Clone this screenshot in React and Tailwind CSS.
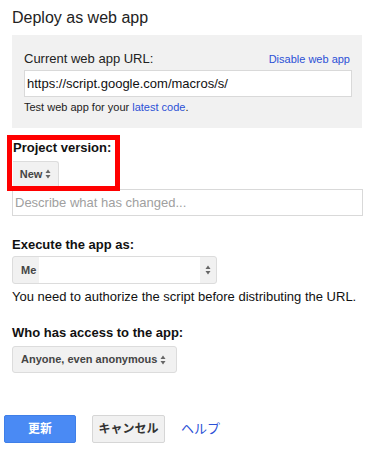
import React from 'react';

const Arrows = () => (
  <svg viewBox="0 0 6 10" className="w-[6px] h-[10px]">
    <path d="M3 0.5 L5.5 4 L0.5 4 Z" fill="#666" />
    <path d="M3 9.5 L5.5 6 L0.5 6 Z" fill="#666" />
  </svg>
);

export default function App() {
  return (
    <div
      className="relative w-[369px] h-[456px] bg-white text-[#111] pt-2"
      style={{ fontFamily: '"Liberation Sans", Arial, "Noto Sans CJK JP", sans-serif' }}
    >
      <h1 className="ml-3 text-[16px] leading-[20px] text-[#222]">Deploy as web app</h1>

      {/* Current URL panel */}
      <div className="ml-3 mt-[7px] w-[350px] bg-[#f1f1f1] pt-4 pl-3 pr-[10px] pb-[14px]">
        <div className="flex items-baseline justify-between">
          <span className="text-[13px] leading-4 text-[#222]">Current web app URL:</span>
          <a className="text-[11px] leading-4 text-[#2b50d6] mr-[2px]">Disable web app</a>
        </div>
        <div className="mt-[3px] h-[27px] bg-white border border-[#d9d9d9] flex items-center pl-[2px] text-[13px] text-[#111]">
          https://script.google.com/macros/s/
        </div>
        <p className="mt-[3px] text-[11px] leading-[14px] text-[#222]">
          Test web app for your <a className="text-[#2b50d6]">latest code</a>.
        </p>
      </div>

      {/* Project version */}
      <div className="ml-3 mt-3">
        <div className="ml-px text-[13px] leading-4 font-bold">Project version:</div>
        <div className="ml-px mt-[5px] w-[46px] h-[25px] bg-[#f1f1f1] border-t border-r border-[#dcdcdc] rounded-tr-[3px] flex items-center justify-center gap-[3px] text-[11px] font-bold text-[#444]">
          New <Arrows />
        </div>
        <div className="mt-[3px] w-[351px] h-[27px] border border-[#d9d9d9] flex items-center pl-[2px] text-[13px] text-[#a0a0a0]">
          Describe what has changed...
        </div>
      </div>

      {/* Red annotation */}
      <div className="absolute left-[7px] top-[135px] w-[113px] h-[56px] border-[5px] border-[#ff0000]" />

      {/* Execute as */}
      <div className="ml-3 mt-[21px]">
        <div className="text-[13px] leading-4 font-bold">Execute the app as:</div>
        <div className="mt-[3px] w-[205px] h-[28px] border border-[#dcdcdc] rounded-[3px] bg-[#f1f1f1] flex items-center overflow-hidden">
          <span className="pl-2 w-[26px] text-[11px] font-bold text-[#444]">Me</span>
          <div className="flex-1 h-full bg-white" />
          <div className="w-[16px] h-full flex items-center justify-center">
            <Arrows />
          </div>
        </div>
        <p className="mt-[5px] text-[13px] leading-4 text-[#111]">
          You need to authorize the script before distributing the URL.
        </p>
      </div>

      {/* Access */}
      <div className="ml-3 mt-5">
        <div className="text-[13px] leading-4 font-bold">Who has access to the app:</div>
        <div className="mt-[5px] w-[165px] h-[27px] border border-[#dcdcdc] rounded-[3px] bg-[#f1f1f1] flex items-center gap-[3px] pl-2 text-[11px] font-bold text-[#444]">
          Anyone, even anonymous <Arrows />
        </div>
      </div>

      {/* Buttons */}
      <div className="mt-[42px] ml-1 flex items-center">
        <button className="w-[72px] h-[28px] rounded-[2px] bg-[#4a8af4] border border-[#3f7fe8] text-white text-[12px] font-bold">
          更新
        </button>
        <button className="ml-4 w-[73px] h-[28px] rounded-[2px] bg-[#f1f1f1] border border-[#d6d6d6] text-[#333] text-[12px] font-bold">
          キャンセル
        </button>
        <a className="ml-4 text-[13px] text-[#2b50d6]">ヘルプ</a>
      </div>
    </div>
  );
}
